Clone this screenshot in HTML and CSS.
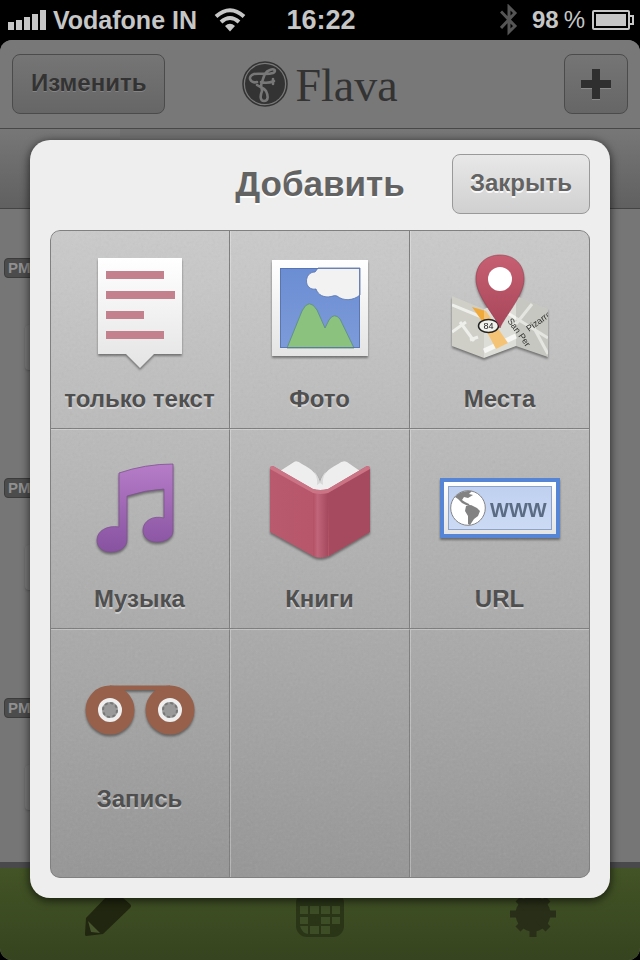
FILE: index.html
```html
<!DOCTYPE html>
<html lang="ru">
<head>
<meta charset="utf-8">
<meta name="viewport" content="width=device-width, initial-scale=1">
<title>Flava</title>
<link rel="stylesheet" href="styles.css">
</head>
<body>
<div class="status">
  <div class="status-left">
    <svg width="38" height="20" viewBox="0 0 38 20" fill="currentColor" aria-hidden="true"><path d="M0 12h6v8H0zM8 10h6v10H8zM16 7h6v13h-6zM24 4h6v16h-6zM32 0h6v20h-6z"/></svg>
    <span class="carrier">Vodafone IN</span>
    <svg class="wifi" width="32" height="24" viewBox="0 0 32 24" aria-hidden="true"><g fill="none" stroke="currentColor" stroke-width="4"><path d="M2 8.500Q16-4 30 8.500"/><path d="M7 14Q16 6 25 14"/></g><path d="M11 18Q16 13.500 21 18L16 23.500Z" fill="currentColor"/></svg>
  </div>
  <time class="clock">16:22</time>
  <div class="status-right">
    <svg class="bluetooth" width="18" height="32" viewBox="0 0 18 32" fill="none" stroke="currentColor" stroke-width="3" aria-hidden="true"><path d="M1 7.500L15 22L9 28V3L15 9L1 24"/></svg>
    <span class="percent"><b>98</b><span>%</span></span>
    <svg width="42" height="20" viewBox="0 0 42 20" aria-hidden="true"><rect x="1" y="1" width="36" height="18" rx="1" fill="none" stroke="currentColor" stroke-width="2"/><rect x="4" y="4" width="30" height="12" fill="currentColor"/><path d="M37 6h4v8h-4" fill="none" stroke="currentColor" stroke-width="2"/></svg>
  </div>
</div>

<div class="app">
  <header class="navbar">
    <button class="nav-button" type="button">Изменить</button>
    <div class="logo">
      <svg width="46" height="46" viewBox="0 0 46 46" aria-hidden="true"><circle cx="23" cy="23" r="22" fill="none" stroke="#333" stroke-width="1.500"/><circle cx="23" cy="23" r="20" fill="#333"/><g fill="none" stroke="#777" stroke-width="2.600" stroke-linecap="round" stroke-linejoin="round"><path d="M15 21C8 23 5 15 12 13C18 12 24 14 31 12C35 10 32 7 28 9C22 11 22 16 20 21C18 25 20 27 20 30C18 35 18 40 22 40C27 40 26 34 24 30C22 27 18 26 15 24"/><path d="M19 21Q25 23 32 20M31 18V23"/></g></svg>
      <span>Flava</span>
    </div>
    <button class="nav-button nav-add" type="button" aria-label="Добавить запись"><svg width="30" height="31" viewBox="0 0 30 31" aria-hidden="true"><path d="M11 1h8v11h11v8H19v11h-8V20H0v-8h11z" fill="#8a8a8a"/><path d="M11 0h8v11h11v8H19v11h-8V19H0v-8h11z" fill="#2f2f2f"/></svg></button>
  </header>
  <div class="subbar"><div class="subbar-mark"></div></div>
  <main class="timeline">
    <div class="entry"><span class="badge">PM</span><div class="entry-card"></div></div>
    <div class="entry"><span class="badge">PM</span><div class="entry-card"></div></div>
    <div class="entry"><span class="badge">PM</span><div class="entry-card"></div></div>
  </main>
  <nav class="tabs">
    <button class="tab" type="button" aria-label="Редактор"><svg width="48" height="48" viewBox="0 0 48 48" aria-hidden="true"><path d="M3 28L27 3Q30 0 33 2L47 14Q49 16 47 18L20 44L3 46Q2 46 2 44Z" fill="#20260f"/><path d="M5 31L17 43L8 42Z" fill="#46552b"/></svg></button>
    <button class="tab" type="button" aria-label="Календарь"><svg width="48" height="48" viewBox="0 0 48 48" aria-hidden="true"><rect y="2" width="48" height="45" rx="11" fill="#2a3518"/><path d="M4 16h8v8H4zM14 16h9v8h-9zM25 16h9v8h-9zM36 16h8v8h-8zM4 27h8v7H4zM25 27h9v7h-9zM36 27h8v7h-8zM4 36h8v8q-6-1-8-8zM14 36h9v8h-9zM25 36h9v8h-9z" fill="#3d4d26"/></svg></button>
    <button class="tab" type="button" aria-label="Настройки"><svg width="48" height="48" viewBox="0 0 48 48" aria-hidden="true"><circle cx="24" cy="24" r="17.500" fill="#282e18"/><path d="M24 1v46M1 24h46M9 9l30 30M39 9L9 39" stroke="#282e18" stroke-width="7"/></svg></button>
  </nav>
</div>

<div class="overlay">
  <section class="dialog" role="dialog" aria-labelledby="dialog-title">
    <div class="dialog-head">
      <h1 id="dialog-title">Добавить</h1>
      <button class="close" type="button">Закрыть</button>
    </div>
    <div class="grid">
      <svg class="grain" aria-hidden="true"><filter id="noise"><feTurbulence type="fractalNoise" baseFrequency="0.35" numOctaves="3"/><feColorMatrix type="saturate" values="0"/></filter><rect width="100%" height="100%" filter="url(#noise)"/></svg>

      <button class="cell" type="button">
        <svg class="icon" viewBox="30 15 120 130" aria-hidden="true">
          <linearGradient id="paper" x1="0" y1="0" x2="0" y2="1"><stop stop-color="#fff"/><stop offset="1" stop-color="#e4e4e4"/></linearGradient>
          <path d="M48 28H132V124H104L90 138L76 124H48Z" fill="url(#paper)"/>
          <path d="M56 41h58v8H56zM56 61h69v8H56zM56 81h38v8H56zM56 101h58v8H56z" fill="#c5808e"/>
        </svg>
        <span>только текст</span>
      </button>

      <button class="cell" type="button">
        <svg class="icon" viewBox="30 15 120 130" aria-hidden="true">
          <linearGradient id="sky" x1="0" y1="0" x2="0" y2="1"><stop stop-color="#6b8dd3"/><stop offset="1" stop-color="#7c9bd9"/></linearGradient>
          <rect x="42" y="30" width="96" height="96" fill="url(#paper)"/>
          <rect x="50" y="38" width="80" height="80" fill="url(#sky)"/>
          <path d="M88 38Q86 41 85 42C79 42 76.500 47 76.500 51C76.500 56 80 60 86 59C88 65 94 68 101 66.500Q105 65 107 66C113 71 123 71 130 65V38Z" fill="#f2f2f2" stroke="#5673ae" stroke-width=".8"/>
          <path d="M57 118L72 81Q79 67 87 80L95 98L99 90Q104 82 110 89L124 118Z" fill="#8bc27e" stroke="#5d8a83" stroke-width=".8"/>
          <rect x="50.500" y="38.500" width="79" height="79" fill="none" stroke="#526ca5" stroke-opacity=".75"/>
        </svg>
        <span>Фото</span>
      </button>

      <button class="cell" type="button">
        <svg class="icon" viewBox="30 15 120 130" aria-hidden="true">
          <linearGradient id="pin" x1="0" y1="0" x2="0" y2="1"><stop stop-color="#c65f71"/><stop offset="1" stop-color="#a84659"/></linearGradient>
          <clipPath id="map-clip"><path d="M42 66L74 79L106 66L138 79V127L106 116L74 128L42 116Z"/></clipPath>
          <g clip-path="url(#map-clip)">
            <rect x="42" y="66" width="96" height="62" fill="#cfcfc8"/>
            <path d="M42 75L74 88M42 102L56 92M50 92L64 111M60 110L68 107M96 82L138 108M106 94L122 74M124 98L138 124" fill="none" stroke="#eeeeea" stroke-width="3"/>
            <path d="M74 121L106 106" stroke="#f3f3ef" stroke-width="5"/>
            <path d="M62 77L76 81L98 113L86 119L78 104L72 91Z" fill="#f0aa3c"/>
            <path d="M74 79l32-13v50l-32 12z" fill="#fff" opacity=".3"/>
            <path d="M106 66l32 13v48l-32-11z" fill="#777" opacity=".08"/>
            <text class="map-text" transform="translate(97 91) rotate(54)">San Per</text>
            <text class="map-text" transform="translate(119 102) rotate(-36)">Pizarro</text>
          </g>
          <ellipse cx="78.500" cy="96" rx="10" ry="6.500" fill="#f1f1ed" stroke="#222" stroke-width="1.500"/>
          <text class="route" x="78.500" y="99" text-anchor="middle">84</text>
          <path d="M90 98C86 87 66 66 66 49C66 34 76 25 90 25S114 34 114 49C114 66 94 87 90 98Z" fill="url(#pin)" stroke="#963f50" stroke-width=".6"/>
          <circle cx="90" cy="49" r="12" fill="#fff"/>
        </svg>
        <span>Места</span>
      </button>

      <button class="cell" type="button">
        <svg class="icon" viewBox="30 15 120 130" aria-hidden="true">
          <linearGradient id="note" x1="0" y1="0" x2="0" y2="1"><stop stop-color="#b67cc8"/><stop offset="1" stop-color="#8752a0"/></linearGradient>
          <path d="M69 43Q95 34 123 34V101C123 108 115 112 107 112C98 112 93 107 93 100C93 91 103 85 114 88V59Q95 60 77 66V110C77 117 70 122 61 122C52 122 47 117 47 110C47 101 57 95 69 97Z" fill="url(#note)" stroke="#7d5390" stroke-width=".8"/>
        </svg>
        <span>Музыка</span>
      </button>

      <button class="cell" type="button">
        <svg class="icon" viewBox="30 15 120 130" aria-hidden="true">
          <linearGradient id="left-cover"><stop stop-color="#b95a6e"/><stop offset="1" stop-color="#b65166"/></linearGradient>
          <linearGradient id="spine"><stop stop-color="#b45065"/><stop offset=".3" stop-color="#c0657a"/><stop offset="1" stop-color="#a5495e"/></linearGradient>
          <path d="M50 41L64 32Q67 30 72 34C82 39 88 45 90 53C92 45 98 39 108 34Q113 30 117 32L130 41L100 63H80Z" fill="#eee"/>
          <path d="M90 53Q89 47 84 41Q88 49 87 55M90 53Q91 47 96 41Q92 49 93 55" fill="#d8d8d8"/>
          <path d="M40 37L43 36L83 59Q90 61 98 59L137 36L140 37V102L99 126Q90 129 83 126L40 102Z" fill="url(#left-cover)"/>
          <path d="M98 63L140 38V102L99 126Z" fill="#a54a5f"/>
          <path d="M83 63Q90 65 98 63V126Q90 129 83 126Z" fill="url(#spine)"/>
          <path d="M40 37L43 36L83 59Q90 61 98 59L137 36L140 37V39L98 63Q90 65 83 63L40 39Z" fill="#cb7485"/>
        </svg>
        <span>Книги</span>
      </button>

      <button class="cell" type="button">
        <svg class="icon" viewBox="30 15 120 130" aria-hidden="true">
          <linearGradient id="plate" x1="0" y1="0" x2="0" y2="1"><stop stop-color="#bfd0f0"/><stop offset="1" stop-color="#ccdaf4"/></linearGradient>
          <rect x="30" y="48" width="120" height="60" fill="#5785d6"/>
          <rect x="34" y="52" width="112" height="52" fill="url(#paper)"/>
          <rect x="38.500" y="56.500" width="103" height="43" fill="url(#plate)" stroke="#8ca2c8"/>
          <circle cx="58" cy="78" r="17.300" fill="#fff" stroke="#858585"/>
          <path d="M45 67Q50 61 58 61L62 61L59 64L63 65L58 68L54 67L52 70L55 72L59 74L60 76L56 75L52 73L48 69ZM56 76L61 75L67 78L70 81L68 86L64 89L60 95L58 94V86L55 81Z" fill="#828282"/>
          <text class="www" x="80" y="87">WWW</text>
        </svg>
        <span>URL</span>
      </button>

      <button class="cell" type="button">
        <svg class="icon" viewBox="30 15 120 130" aria-hidden="true">
          <g fill="#96604a"><circle cx="60" cy="80" r="24.500"/><circle cx="120" cy="80" r="24.500"/><path d="M60 55.500H120V63Q109 60 105 60H75Q71 60 60 63Z"/></g>
          <g fill="#999" stroke="#eee" stroke-width="4"><circle cx="60" cy="80" r="10"/><circle cx="120" cy="80" r="10"/></g>
          <g fill="none" stroke="#777" stroke-width="2" stroke-dasharray="3 2.500"><circle cx="60" cy="80" r="7"/><circle cx="120" cy="80" r="7"/></g>
        </svg>
        <span>Запись</span>
      </button>
      <div class="cell"></div>
      <div class="cell"></div>
    </div>
  </section>
</div>
</body>
</html>
```
FILE: styles.css
```css
* { box-sizing: border-box; }

body {
  margin: 0;
  min-height: 100vh;
  display: flex;
  flex-direction: column;
  position: relative;
  background: #000;
  font-family: "Liberation Sans", Arial, sans-serif;
}

button {
  font: inherit;
  padding: 0;
  border: 0;
  background: none;
  cursor: pointer;
}

svg { display: block; flex: none; }

/* Status bar */
.status {
  height: 40px;
  padding: 0 6px 0 8px;
  display: grid;
  grid-template-columns: 1fr auto 1fr;
  align-items: center;
  color: #c6c6c6;
  font-weight: bold;
}
.status-left, .status-right { display: flex; align-items: center; }
.status-left { gap: 7px; }
.status-right { justify-content: flex-end; gap: 7px; }
.carrier { font-size: 25px; white-space: nowrap; }
.wifi { margin-left: 10px; }
.clock { font-size: 27px; }
.bluetooth { color: #555; margin-right: 7px; }
.percent { display: flex; gap: 5px; font-size: 24px; }
.percent span { font-weight: normal; }

/* App behind the dialog */
.app {
  flex: 1;
  display: flex;
  flex-direction: column;
  overflow: hidden;
  border-radius: 12px;
  background: #767676;
}
.navbar {
  display: grid;
  grid-template-columns: 1fr auto 1fr;
  align-items: center;
  padding: 14px 12px;
  background: #787878;
  border-bottom: 1px solid #484848;
}
.nav-button {
  justify-self: start;
  height: 60px;
  padding: 0 18px 2px;
  border: 1px solid #4b4b4b;
  border-radius: 8px;
  background: linear-gradient(#757575, #666);
  color: #333;
  font-size: 24px;
  font-weight: bold;
  text-shadow: 0 1px 0 #858585;
}
.nav-add { justify-self: end; padding: 0 16px; }
.logo {
  display: flex;
  align-items: center;
  gap: 7px;
  color: #333;
  font-family: "Liberation Serif", serif;
  font-size: 46px;
  line-height: 56px;
}
.logo span { padding-top: 4px; }
.subbar {
  height: 80px;
  flex: none;
  background: linear-gradient(#777, #606060);
  border-bottom: 1px solid #444;
}
.subbar-mark {
  width: 25%;
  height: 8px;
  margin-left: 120px;
  background: #707070;
}
.timeline { flex: 1 1 0; overflow: hidden; }
.entry { height: 220px; padding: 49px 40px 0 4px; }
.badge {
  display: block;
  width: 40px;
  height: 20px;
  padding-left: 3px;
  border: 1px solid #3c3c3c;
  border-radius: 4px;
  background: #4c4c4c;
  color: #909090;
  font-size: 15px;
  font-weight: bold;
  line-height: 18px;
}
.entry-card {
  height: 45px;
  margin: 47px 0 0 21px;
  border-radius: 4px;
  background: #7a7a7a;
  box-shadow: 0 1px 2px #606060;
}
.tabs {
  display: grid;
  grid-template-columns: repeat(3, 1fr);
  height: 98px;
  border-top: 6px solid #49494c;
  background: linear-gradient(#435426, #36441f);
}
.tab { display: grid; place-items: center; }

/* Dialog */
.overlay {
  position: absolute;
  inset: 0;
  padding: 140px 30px 62px;
}
.dialog {
  padding: 14px 20px 20px;
  border-radius: 20px;
  background: #eee;
  box-shadow: 0 2px 8px 1px rgba(0, 0, 0, .6);
}
.dialog-head {
  display: grid;
  grid-template-columns: 1fr auto 1fr;
  align-items: center;
  margin-bottom: 16px;
}
h1 {
  grid-column: 2;
  margin: 0;
  color: #636363;
  font-size: 35px;
  line-height: 60px;
  text-shadow: 0 2px 0 #fff;
}
.close {
  justify-self: end;
  height: 60px;
  padding: 0 17px 2px;
  border: 1px solid #999;
  border-radius: 8px;
  background: linear-gradient(#e8e8e8, #d0d0d0);
  color: #636363;
  font-size: 24px;
  font-weight: bold;
  text-shadow: 0 2px 0 #f8f8f8;
}
.grid {
  position: relative;
  display: grid;
  grid-template-columns: repeat(3, 1fr);
  grid-template-rows: 200px 200px 248px;
  overflow: hidden;
  border-radius: 10px;
  background: linear-gradient(#cbcbcb, #969696);
}
.grid::after {
  content: "";
  position: absolute;
  inset: 0;
  border: 1px solid #808080;
  border-radius: 10px;
  pointer-events: none;
}
.grain {
  position: absolute;
  inset: 0;
  width: 100%;
  height: 100%;
  opacity: .1;
  pointer-events: none;
}
.cell {
  display: flex;
  flex-direction: column;
  align-items: center;
  gap: 8px;
  padding-top: 15px;
  border-right: 1px solid #7c7c7c;
  border-bottom: 1px solid rgba(255, 255, 255, .3);
  box-shadow: inset 0 -1px 0 #7c7c7c, inset 1px 0 0 rgba(255, 255, 255, .3);
  color: #4a4a4a;
  font-size: 24px;
  font-weight: bold;
  line-height: 32px;
  text-shadow: 0 2px 0 rgba(255, 255, 255, .45);
  white-space: nowrap;
}
.cell:nth-last-child(-n+3) {
  border-bottom: 0;
  box-shadow: inset 1px 0 0 rgba(255, 255, 255, .3);
}
.icon {
  width: 120px;
  height: 130px;
  overflow: visible;
  filter: drop-shadow(0 2px 1px rgba(0, 0, 0, .4));
  text-shadow: none;
}
.map-text { font-size: 9px; font-weight: normal; fill: #333; }
.route { font-size: 9px; font-weight: normal; fill: #222; }
.www { font-size: 20px; font-weight: bold; fill: #5b6b83; }
```
